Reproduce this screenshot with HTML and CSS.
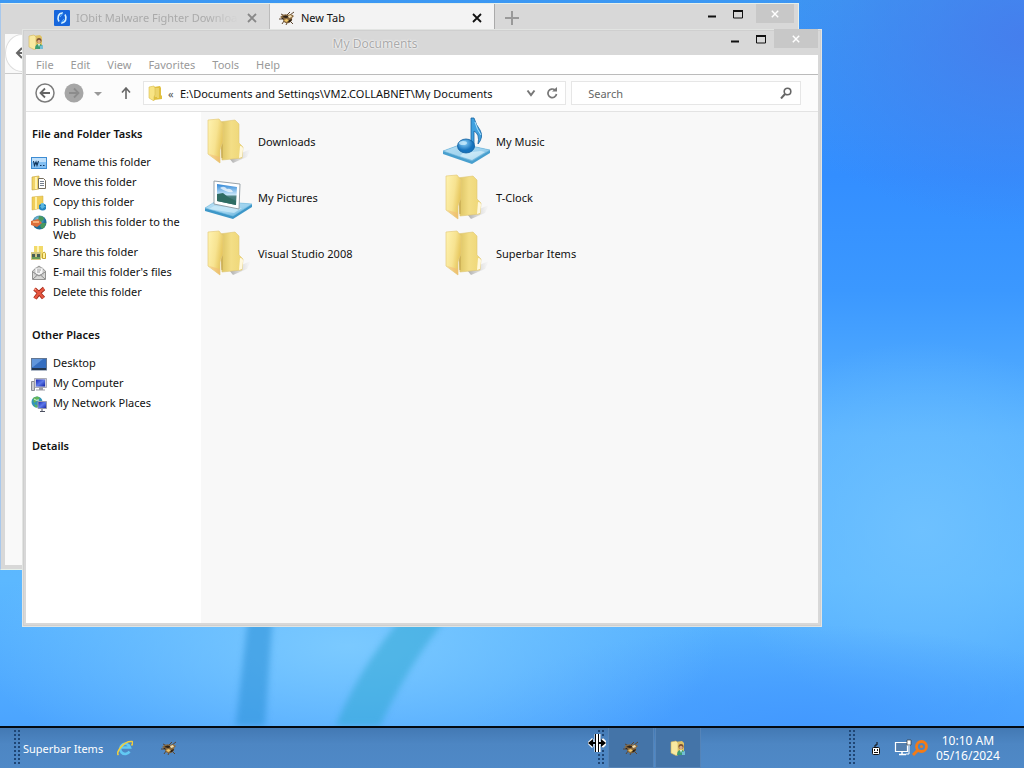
FILE: index.html
```html
<!DOCTYPE html>
<html lang="en">
<head>
<meta charset="utf-8">
<title>My Documents</title>
<link rel="stylesheet" href="styles.css">
</head>
<body>
<svg class="defs" aria-hidden="true">
  <defs>
    <linearGradient id="gFront" x1="0" x2="1" y1="0" y2="0.4"><stop offset="0" stop-color="#fff3b0"/><stop offset="0.6" stop-color="#f7e391"/><stop offset="1" stop-color="#e6c65c"/></linearGradient>
    <linearGradient id="gBack" x1="0" x2="1"><stop offset="0" stop-color="#d9bf5c"/><stop offset="0.5" stop-color="#f3de86"/><stop offset="1" stop-color="#eed676"/></linearGradient>
    <linearGradient id="gBase" x1="0" x2="1" y1="0" y2="1"><stop offset="0" stop-color="#b9e0f4"/><stop offset="0.6" stop-color="#9dd2ee"/><stop offset="1" stop-color="#4da4d4"/></linearGradient>
    <linearGradient id="gSky" x1="0" x2="0" y1="0" y2="1"><stop offset="0" stop-color="#2f86d6"/><stop offset="0.5" stop-color="#c4e4f8"/><stop offset="0.6" stop-color="#4a7f7e"/><stop offset="1" stop-color="#2c6e6b"/></linearGradient>
    <radialGradient id="gNote" cx="0.4" cy="0.3"><stop offset="0" stop-color="#8ed3fa"/><stop offset="1" stop-color="#1673bd"/></radialGradient>
    <linearGradient id="gShadow" x1="0" x2="1"><stop offset="0" stop-color="#888" stop-opacity="0.7"/><stop offset="1" stop-color="#bbb" stop-opacity="0"/></linearGradient>
    <radialGradient id="gGlobe" cx="0.4" cy="0.3"><stop offset="0" stop-color="#8fd0e8"/><stop offset="1" stop-color="#1d6d96"/></radialGradient>
    <linearGradient id="gScreen" x1="0" x2="1" y1="0" y2="1"><stop offset="0" stop-color="#1523b5"/><stop offset="0.5" stop-color="#5d79ea"/><stop offset="1" stop-color="#0f1fa0"/></linearGradient>

    <symbol id="folder" viewBox="0 0 48 48">
      <path d="M24 41 L46 32 L42 40 L28 46Z" fill="url(#gShadow)"/>
      <path d="M14 5 L30 3 L34 7 L34 26 L38 30 L37 41 L17 43Z" fill="url(#gBack)" stroke="#dfc673" stroke-width=".6"/>
      <path d="M17 7v34" stroke="#bfa049" stroke-width="2" opacity=".5"/>
      <path d="M35 29c2 0 3 1 3 3l-1 8-3 1z" fill="#fff8dc"/>
      <path d="M3 3 L14 2 L18 7 L18 25 Q16 29 15 33 L15 46 L3 37 Z" fill="url(#gFront)" stroke="#e5cc7c" stroke-width=".7"/>
      <path d="M4 37l11 9v-6z" fill="#f2b978" opacity=".55"/>
    </symbol>
    <symbol id="pictures" viewBox="0 0 48 48">
      <path d="M0 35 L11 29 L47 31 L47 34 L28 46 L0 38Z" fill="#3d97c8"/>
      <path d="M0 35 L11 28 L47 31 L28 43Z" fill="url(#gBase)" stroke="#79bde0" stroke-width=".6"/>
      <path d="M9 33 L37 35 L29 40 L4 36Z" fill="#d9f1fb" opacity=".6"/>
      <path d="M9 8 L35 11 L34 36 L9 31Z" fill="#fff" stroke="#8d999f" stroke-width=".9"/>
      <path d="M12 11 L32 14 L31 32 L12 28Z" fill="url(#gSky)"/>
      <path d="M12 21l6-1 5 4 8 4v4l-19-4z" fill="#2f6c63"/>
      <path d="M15 15q4-3 7 1 4-1 6 3-6 1-13-4z" fill="#fff" opacity=".7"/>
    </symbol>
    <symbol id="music" viewBox="0 0 48 48">
      <path d="M0 34 L19 27 L47 33 L47 36 L29 47 L0 37Z" fill="#489fce"/>
      <path d="M0 34 L19 27 L47 33 L29 44Z" fill="url(#gBase)" stroke="#70b6da" stroke-width=".6"/>
      <path d="M20 36l18-2 4 1-13 8-12-4z" fill="#e5f7fe" opacity=".6"/>
      <path d="M28 1 L31 1 Q33 8 37 13 Q41 20 35 27 Q37 17 31 14 L31 31 L28 31Z" fill="#3fa0df" stroke="#1762a0" stroke-width=".8"/>
      <path d="M32 5q2 8 6 13" stroke="#a9e0fb" stroke-width="1" fill="none"/>
      <ellipse cx="23" cy="29" rx="8.500" ry="7" fill="url(#gNote)" stroke="#12609f" stroke-width=".8"/>
      <ellipse cx="20" cy="26" rx="4" ry="2" fill="#d3f1fd" opacity=".7"/>
    </symbol>
    <symbol id="user-folder" viewBox="0 0 16 16">
      <path d="M5 2l7-1 2 2v11l-9 1z" fill="#dfc266"/>
      <path d="M1 2l5-1 2 2v12l-2 .5L1 13z" fill="#f8e9a1" stroke="#d3b75c" stroke-width=".6"/>
      <circle cx="11" cy="6.500" r="2.500" fill="#7a5134"/><circle cx="11" cy="7.500" r="1.700" fill="#e0ac84"/>
      <path d="M7 15q0-5 4-5t4 5z" fill="#3c9d73"/><path d="M10 10l1 3 1-3z" fill="#e8f7f0"/><path d="M12 12l3-1v4h-3z" fill="#71bdd6"/>
    </symbol>
    <symbol id="mini-folder" viewBox="0 0 16 16">
      <path d="M6 2l6-1 1 2v7l1 1v3l-8 1z" fill="#e0bf3f"/><path d="M8 3v9M10 3v10" stroke="#f8ea9c"/>
      <path d="M1 2l5-1 1 2v7l-1 2v4l-5-3z" fill="#f8e485" stroke="#d9bd4e" stroke-width=".6"/>
    </symbol>
    <symbol id="bee" viewBox="0 0 16 16">
      <path d="M6 6L2 4M7 6l4-4M11 5l4-3M4 9H0M5 11l-2 3M8 13l-1 2M12 12l2 2" stroke="#5c4630" stroke-width="1" fill="none"/>
      <path d="M1 7q4-4 8-2 3-2 6 1l-2 2q1 3-3 5-6 1-6-4z" fill="#8a6a3f"/>
      <path d="M3 7q4-3 7 0l-3 1zM8 12q4 1 5-3l-3 1z" fill="#2b2118"/>
      <path d="M5 10l3-1 2 2-3 1z" fill="#f2c868"/>
      <path d="M9 6l3-1 1 2-3 1z" fill="#f1dfb4"/>
      <path d="M2 8l2 0 1 2z" fill="#2b2118"/>
    </symbol>
    <symbol id="iobit" viewBox="0 0 16 16">
      <rect width="16" height="16" rx="1" fill="#1666dc"/>
      <path d="M9 3C4 3 3 8 5 11.500M7 13c5 0 6-5 4-8.500" fill="none" stroke="#d7f1ff" stroke-width="1.600"/><path d="M9 3L6 7M7 13l3-4" stroke="#61b8ff"/>
    </symbol>
    <symbol id="rename" viewBox="0 0 16 16">
      <rect x=".5" y="2.500" width="15" height="11" fill="#83bff2" stroke="#3d8cd3"/><path d="M1 3h14v4H1z" fill="#c0e0fb"/>
      <path d="M2.500 6l1 4.500L5 7l1 3.500L7.500 6M9 10.500h1.500M12 10.500h1.500" stroke="#11365d" stroke-width="1.100" fill="none"/>
    </symbol>
    <symbol id="move" viewBox="0 0 16 16">
      <path d="M1 2l7-1v13l-7 1z" fill="#f2d568" stroke="#c5a137" stroke-width=".6"/><path d="M5 2v12" stroke="#fff3b2" stroke-width="2"/>
      <path d="M7.500 3.500h5l2 2v8h-7z" fill="#fff" stroke="#746c5c"/><path d="M9 6.500h4M9 8.500h4M9 10.500h4" stroke="#77818e"/>
    </symbol>
    <symbol id="copy" viewBox="0 0 16 16">
      <path d="M1 2l11-1v12L1 15z" fill="#f0ce58" stroke="#ceaa3f" stroke-width=".5"/><path d="M5 2v12" stroke="#fff1a8" stroke-width="2"/>
      <path d="M8 10q4-3 7 0v4q-3 3-7 0z" fill="#2583bd"/><path d="M10 8l3 0v3h2l-4 3-2-3h1z" fill="#69c3e8" opacity=".8"/>
    </symbol>
    <symbol id="globe" viewBox="0 0 16 16">
      <circle cx="8.500" cy="7.500" r="7" fill="url(#gGlobe)"/><path d="M8 1q5 0 5 3l-3 3-3-2zM11 8l4 0q-1 5-4 6l-2-3z" fill="#49995d"/>
      <path d="M0 6l7-2 4 4-5 4-6-2z" fill="#db6f3b"/><path d="M2 7h6" stroke="#ffc48d" stroke-width="1.500"/>
    </symbol>
    <symbol id="share" viewBox="0 0 16 16">
      <path d="M3 1l9 0v12l-9 1z" fill="#f2da6a"/><path d="M7 1v9" stroke="#fff4b5" stroke-width="2"/>
      <path d="M0 7h10v8H0z" fill="#d2c680"/><path d="M1 9h3v3H1zM6 9h3v3H6z" fill="#475e57"/><path d="M1 13h8" stroke="#6a9a56" stroke-width="2"/>
      <path d="M11.500 8.500q2-3 3 0v5h-3z" fill="#fff2a0" stroke="#c5a42f"/>
    </symbol>
    <symbol id="mail" viewBox="0 0 16 16">
      <path d="M1.500 6L8 1l6.500 5v8.500h-13z" fill="#d8d8d6" stroke="#939391"/><path d="M4 3h8v7H4z" fill="#f8f8f8" stroke="#aaa" stroke-width=".6"/>
      <path d="M2 7l6 4 6-4M2 14l4.500-4M14 14l-4.500-4" stroke="#8b8b8b" fill="none"/><path d="M6 5h4M6 7h3" stroke="#999"/>
    </symbol>
    <symbol id="delete" viewBox="0 0 16 16">
      <path d="M3.500 4q4 3 9 9M13 3.500Q8 7 4 13.500" stroke="#9d2819" stroke-width="4" fill="none"/><path d="M3.500 4q4 3 9 9M13 3.500Q8 7 4 13.500" stroke="#e65640" stroke-width="2.400" fill="none"/><path d="M3 3.500l2 1.500" stroke="#f9b09d"/>
    </symbol>
    <symbol id="desk" viewBox="0 0 16 16">
      <rect x=".5" y="2.500" width="15" height="11.500" fill="#356ec0" stroke="#637792"/><path d="M1 3h11L2 11H1z" fill="#75a6e7" opacity=".7"/><path d="M1 13h14" stroke="#22364f" stroke-width="2"/>
    </symbol>
    <symbol id="computer" viewBox="0 0 16 16">
      <path d="M.5 5.500h3v9h-3z" fill="#cbccd0" stroke="#8a8c94"/><path d="M3.500 2.500h12v9h-12z" fill="#ccccda" stroke="#92949d" stroke-width=".7"/><path d="M5 3.500h9v7H5z" fill="url(#gScreen)"/><path d="M8 11.500h4v2H8zM5 13.500h9v1H5z" fill="#9b9ca5"/>
    </symbol>
    <symbol id="network" viewBox="0 0 16 16">
      <circle cx="6" cy="6" r="5.500" fill="#3294b7"/><path d="M2 2q5-3 7 0L6 5 3 7zM3 8l4 2-2 2z" fill="#62b558"/><path d="M3 3q2 2 5 1" stroke="#d7f2ef" fill="none"/>
      <path d="M7 5.500h8.500v7H7z" fill="url(#gScreen)" stroke="#999cac"/><path d="M11 13v3M9 15.500h5" stroke="#4c5060"/>
    </symbol>
    <symbol id="close" viewBox="0 0 10 10"><path d="M1 1l8 8M9 1L1 9" stroke="currentColor" stroke-width="1.800"/></symbol>
    <symbol id="min" viewBox="0 0 10 10"><path d="M1 7.500h8" stroke="currentColor" stroke-width="2"/></symbol>
    <symbol id="max" viewBox="0 0 10 10"><path d="M.5 1v8h9V1" fill="none" stroke="currentColor"/><path d="M0 2h10" stroke="currentColor" stroke-width="2"/></symbol>
  </defs>
</svg>

<div class="screen">
  <main class="desktop">
    <svg class="strands" viewBox="0 0 1024 726" preserveAspectRatio="none" aria-hidden="true">
      <path d="M250 600h24l-10 140h-30z" fill="#2f92d8" opacity=".6"/>
      <path d="M418 600h44q-54 60-88 140h-44q30-80 88-140z" fill="#32a7d4" opacity=".55"/>
    </svg>

    <section class="window browser" aria-label="New Tab">
      <div class="tabstrip">
        <div class="tab tab-idle"><svg class="i16"><use href="#iobit"/></svg><button class="tab-name">IObit Malware Fighter Downloa</button><button class="tab-x" aria-label="Close tab"><svg class="i10"><use href="#close"/></svg></button></div>
        <div class="tab tab-active"><svg class="i16"><use href="#bee"/></svg><button class="tab-name">New Tab</button><button class="tab-x" aria-label="Close tab"><svg class="i10"><use href="#close"/></svg></button></div>
        <button class="tab-add" aria-label="Open a new tab"><svg class="i14" viewBox="0 0 14 14"><path d="M7 0v14M0 7h14" stroke="#999" stroke-width="2"/></svg></button>
        <div class="controls">
          <button aria-label="Minimize"><svg class="i10"><use href="#min"/></svg></button>
          <button aria-label="Maximize"><svg class="i10"><use href="#max"/></svg></button>
          <button class="control-close" aria-label="Close"><svg class="i8"><use href="#close"/></svg></button>
        </div>
      </div>
      <div class="browser-nav"><button class="browser-back" aria-label="Back"><svg class="i14" viewBox="0 0 14 14"><path d="M13 7H2M7 2L2 7l5 5" fill="none" stroke="#666" stroke-width="2"/></svg></button></div>
      <div class="browser-page"></div>
    </section>

    <section class="window explorer" aria-label="My Documents">
      <header class="titlebar">
        <svg class="i16"><use href="#user-folder"/></svg>
        <h1>My Documents</h1>
        <div class="controls">
          <button aria-label="Minimize"><svg class="i10"><use href="#min"/></svg></button>
          <button aria-label="Maximize"><svg class="i10"><use href="#max"/></svg></button>
          <button class="control-close" aria-label="Close"><svg class="i8"><use href="#close"/></svg></button>
        </div>
      </header>
      <nav class="menubar"><button>File</button><button>Edit</button><button>View</button><button>Favorites</button><button>Tools</button><button>Help</button></nav>
      <div class="toolbar">
        <div class="nav-buttons">
          <button aria-label="Back"><svg class="i20" viewBox="0 0 20 20"><circle cx="10" cy="10" r="9" fill="#fff" stroke="#7c7c7c" stroke-width="1.500"/><path d="M15 10H6M10 5.500L5.500 10l4.500 4.500" fill="none" stroke="#666" stroke-width="1.800"/></svg></button>
          <button aria-label="Forward"><svg class="i20" viewBox="0 0 20 20"><circle cx="10" cy="10" r="9.500" fill="#a6a6a6"/><path d="M5 10h9M10 5.500l4.500 4.500-4.500 4.500" fill="none" stroke="#8c8c8c" stroke-width="1.800"/></svg></button>
          <button aria-label="Recent locations"><svg class="i10" viewBox="0 0 10 10"><path d="M1 4h8L5 8z" fill="#999"/></svg></button>
          <button class="up" aria-label="Up"><svg class="i12" viewBox="0 0 12 12"><path d="M6 12V1M2 5.500L6 1l4 4.500" fill="none" stroke="#666" stroke-width="1.600"/></svg></button>
        </div>
        <div class="address">
          <svg class="i16"><use href="#mini-folder"/></svg><span class="crumb">«</span>
          <input type="text" aria-label="Address" value="E:\Documents and Settings\VM2.COLLABNET\My Documents">
          <button aria-label="Previous locations"><svg class="i10" viewBox="0 0 10 10"><path d="M1.500 2.500L5 7l3.500-4.500" fill="none" stroke="#777" stroke-width="2"/></svg></button>
          <button aria-label="Refresh"><svg class="i12" viewBox="0 0 12 12"><path d="M9 3A4.300 4.300 0 1 0 10.500 7" fill="none" stroke="#777" stroke-width="1.700"/><path d="M6 4.500h5V0z" fill="#777"/></svg></button>
        </div>
        <div class="search">
          <input type="text" aria-label="Search" placeholder="Search">
          <button aria-label="Start search"><svg class="i12" viewBox="0 0 12 12"><circle cx="7.500" cy="4.500" r="3.300" fill="none" stroke="#666" stroke-width="1.600"/><path d="M5 7L1 11.500" stroke="#666" stroke-width="2"/></svg></button>
        </div>
      </div>
      <div class="body">
        <aside class="sidebar">
          <h2>File and Folder Tasks</h2>
          <ul>
            <li><a href="#"><svg class="i16"><use href="#rename"/></svg>Rename this folder</a></li>
            <li><a href="#"><svg class="i16"><use href="#move"/></svg>Move this folder</a></li>
            <li><a href="#"><svg class="i16"><use href="#copy"/></svg>Copy this folder</a></li>
            <li><a href="#"><svg class="i16"><use href="#globe"/></svg>Publish this folder to the Web</a></li>
            <li><a href="#"><svg class="i16"><use href="#share"/></svg>Share this folder</a></li>
            <li><a href="#"><svg class="i16"><use href="#mail"/></svg>E-mail this folder's files</a></li>
            <li><a href="#"><svg class="i16"><use href="#delete"/></svg>Delete this folder</a></li>
          </ul>
          <h2>Other Places</h2>
          <ul>
            <li><a href="#"><svg class="i16"><use href="#desk"/></svg>Desktop</a></li>
            <li><a href="#"><svg class="i16"><use href="#computer"/></svg>My Computer</a></li>
            <li><a href="#"><svg class="i16"><use href="#network"/></svg>My Network Places</a></li>
          </ul>
          <h2>Details</h2>
        </aside>
        <div class="files">
          <a href="#"><svg class="i48"><use href="#folder"/></svg>Downloads</a>
          <a href="#"><svg class="i48"><use href="#music"/></svg>My Music</a>
          <a href="#"><svg class="i48"><use href="#pictures"/></svg>My Pictures</a>
          <a href="#"><svg class="i48"><use href="#folder"/></svg>T-Clock</a>
          <a href="#"><svg class="i48"><use href="#folder"/></svg>Visual Studio 2008</a>
          <a href="#"><svg class="i48"><use href="#folder"/></svg>Superbar Items</a>
        </div>
      </div>
    </section>
  </main>

  <footer class="taskbar">
    <div class="band quick">
      <span class="grip"></span><span class="band-name">Superbar Items</span>
      <button aria-label="Internet Explorer"><svg class="i16" viewBox="0 0 16 16"><path d="M12.500 11.500A5 5 0 1 1 13 7.500H4" fill="none" stroke="#62c9f3" stroke-width="2.600"/><path d="M1.500 15Q-1 13 4 7T15 1.500q1.500 1-.5 4" fill="none" stroke="#f2cf3e" stroke-width="1.600"/></svg></button>
      <button aria-label="Browser"><svg class="i16"><use href="#bee"/></svg></button>
    </div>
    <div class="band tasks">
      <span class="grip"></span>
      <button class="task" aria-label="New Tab"><svg class="i16"><use href="#bee"/></svg></button>
      <button class="task" aria-label="My Documents"><svg class="i16"><use href="#user-folder"/></svg></button>
      <svg class="cursor" viewBox="0 0 18 20" aria-hidden="true"><path d="M8 1v18M11 1v18M1 10h17M5 6l-4 4 4 4M14 6l4 4-4 4" stroke="#fff" stroke-width="3" fill="none"/><path d="M7.500 1v18M10.500 1v18" stroke="#000" stroke-width="1"/><path d="M0 10l5-4v3h2v2H5v3zM18 10l-5-4v3h-2v2h2v3z" fill="#000"/></svg>
    </div>
    <div class="band tray">
      <span class="grip"></span>
      <button aria-label="Safely remove hardware"><svg class="i16" viewBox="0 0 16 16"><path d="M7 7V5h2V2" fill="none" stroke="#111"/><rect x="4.500" y="7.500" width="7" height="7" rx="1" fill="#fff" stroke="#111"/><path d="M6 9h1v2H6zM9 9h1v2H9zM6 12h4v1H6z" fill="#111"/></svg></button>
      <button aria-label="Network"><svg class="i18" viewBox="0 0 18 18"><path d="M1.500 3.500h12v9h-12z" fill="#547fae" stroke="#fff" stroke-width="1.200"/><path d="M5 15.500h7M8 13v2" stroke="#fff" stroke-width="1.500"/><path d="M13 1h4v5h-4z" fill="#fff" stroke="#333" stroke-width=".7"/><path d="M15 6v9h-3" stroke="#fff" fill="none"/></svg></button>
      <button aria-label="Search everything"><svg class="i16" viewBox="0 0 16 16"><circle cx="9.500" cy="6.500" r="5" fill="none" stroke="#f47b16" stroke-width="2.800"/><path d="M6 10l-5 5" stroke="#f47b16" stroke-width="3"/><circle cx="9.500" cy="6.500" r="1.500" fill="#f47b16"/></svg></button>
      <button class="clock"><span>10:10 AM</span><span>05/16/2024</span></button>
    </div>
  </footer>
</div>
</body>
</html>
```
FILE: styles.css
```css
* { box-sizing: border-box; }
body { margin: 0; font: 11px/13px "Noto Sans", "Open Sans", sans-serif; color: #111; }
button, input { font: inherit; color: inherit; background: none; border: 0; padding: 0; margin: 0; }
button { display: flex; align-items: center; justify-content: center; }
input { min-width: 0; outline: 0; }
a { color: inherit; text-decoration: none; }
h1, h2, ul { margin: 0; padding: 0; font-weight: normal; list-style: none; }
svg { display: block; flex: none; }
.defs { position: absolute; width: 0; height: 0; }
.i8 { width: 8px; height: 8px; }
.i10 { width: 10px; height: 10px; }
.i12 { width: 12px; height: 12px; }
.i14 { width: 14px; height: 14px; }
.i16 { width: 16px; height: 16px; }
.i18 { width: 18px; height: 18px; }
.i20 { width: 20px; height: 20px; }
.i48 { width: 48px; height: 48px; }

.screen { height: 100vh; display: grid; grid-template-rows: minmax(0, 1fr) 42px; }
.desktop {
  position: relative;
  overflow: hidden;
  background:
    radial-gradient(ellipse 26% 26% at 100% 5%, rgba(70, 124, 236, .9), rgba(70, 124, 236, 0)),
    radial-gradient(ellipse 36% 20% at 34% 89%, rgba(125, 203, 255, .95), rgba(125, 203, 255, 0)),
    radial-gradient(ellipse 32% 14% at 78% 100%, rgba(66, 152, 255, .9), rgba(66, 152, 255, 0)),
    radial-gradient(ellipse 20% 26% at 90% 73%, rgba(112, 194, 255, .9), rgba(112, 194, 255, 0)),
    linear-gradient(#3c98f3, #338eff 24%, #3b98ff 40%, #5ab3ff 60%, #5cb8ff 80%, #4ba4ff);
}
.strands { position: absolute; inset: 0; width: 100%; height: 100%; filter: blur(3px); }

.window { position: absolute; display: flex; flex-direction: column; background: #d8d8d8; }
.controls { display: flex; margin-left: auto; color: #111; }
.controls button { width: 26px; height: 19px; }
.controls .control-close { width: 38px; background: #c8c8c8; color: #fff; margin-left: 5px; }

.browser { inset: 3px 225px 156px 0; padding: 0 4px 4px; border: 1px solid #e6f0ea; border-left-color: #a8c8ec; }
.tabstrip { display: flex; align-items: flex-start; padding-left: 40px; height: 30px; }
.tab { display: flex; align-items: center; gap: 6px; height: 27px; width: 225px; padding: 0 9px; }
.tab-idle { color: #aaa; border-right: 1px solid #bbb; }
.tab-active { background: #f3f3f3; border-right: 1px solid #aaa; }
.tab-name { flex: 1; min-width: 0; justify-content: flex-start; overflow: hidden; white-space: nowrap; line-height: 20px; }
.tab-idle .tab-name { mask-image: linear-gradient(90deg, #000 80%, transparent); }
.tab-x { width: 16px; }
.tab-idle .tab-x { color: #888; }
.tab-add { width: 34px; height: 27px; }
.browser-nav { height: 40px; background: #f9f9f9; border-bottom: 1px solid #ccc; }
.browser-back { width: 34px; height: 38px; border: 1px solid #ddd; border-radius: 50%; background: #fff; }
.browser-page { flex: 1; background: #f9f9f9; }

.explorer { inset: 29px 202px 99px 22px; padding: 0 4px 4px; box-shadow: inset 0 0 0 1px #e2e4e2, inset 0 0 0 2px #cfcfcf; }
.titlebar { display: grid; grid-template-columns: 1fr auto 1fr; height: 26px; padding-left: 2px; align-items: center; }
.titlebar h1 { padding-top: 3px; margin-right: 96px; font-size: 12px; line-height: 16px; color: #aaa; text-shadow: 0 0 2px #fff, 0 0 2px #fff; }
.titlebar .controls { align-self: start; }
.titlebar .controls .control-close { width: 44px; margin-left: 0; }
.menubar { display: flex; gap: 17px; height: 20px; padding-left: 10px; background: #fff; border-bottom: 1px solid #bbb; color: #999; }
.toolbar { display: flex; align-items: center; height: 37px; padding: 0 17px 0 9px; background: #fcfcfc; border-bottom: 1px solid #e3e3e3; }
.nav-buttons { display: flex; align-items: center; gap: 9px; width: 108px; }
.nav-buttons .up { margin-left: 8px; }
.address, .search { display: flex; align-items: center; height: 24px; background: #fff; border: 1px solid #e6e6e6; }
.address { flex: 1; min-width: 0; padding: 0 7px 0 4px; gap: 4px; }
.address input { flex: 1; }
.address button { margin-left: 6px; }
.crumb { width: 8px; color: #555; }
.search { flex: 0 1 30%; min-width: 0; margin-left: 5px; padding: 0 8px 0 16px; color: #666; }
.search input { flex: 1; }
.search input::placeholder { color: #666; opacity: 1; }
.body { flex: 1; min-height: 0; display: grid; grid-template-columns: 175px minmax(0, 1fr); }
.sidebar { padding: 15px 10px 0 5px; background: #fff; overflow: hidden; }
.sidebar h2 { padding-left: 1px; font-size: 11px; line-height: 14px; font-weight: 600; white-space: nowrap; }
.sidebar ul { display: grid; gap: 4px; margin: 14px 0 27px; }
.sidebar a { display: flex; gap: 6px; min-height: 16px; }
.files { display: grid; grid-template-columns: repeat(auto-fill, 238px); grid-auto-rows: 48px; row-gap: 8px; align-content: start; padding: 5px 4px; background: #f8f8f8; overflow: hidden; }
.files a { display: flex; align-items: center; gap: 5px; }

.taskbar { display: grid; grid-template-columns: minmax(0, 584fr) minmax(0, 251fr) 175px; padding-left: 14px; border-top: 2px solid #030a12; background: linear-gradient(#4379b4, #4d86c3 40%, #4f89c7); color: #fff; }
.band { display: flex; align-items: center; }
.grip { width: 6px; height: 36px; background: radial-gradient(circle at 1px 1px, #1f4675 1px, transparent 1px) 0 0 / 4px 4px; }
.band-name { margin: 0 12px 0 3px; }
.quick button { width: 20px; margin-right: 24px; }
.tasks { position: relative; gap: 1px; }
.tasks .grip { margin-right: 3px; }
.task { width: 46px; height: 40px; background: #4474a8; border: 1px solid #5584b8; border-top: 0; }
.cursor { position: absolute; left: -10px; top: 5px; width: 18px; height: 20px; }
.tray .grip { margin-right: 13px; }
.tray button + button { margin-left: 10px; }
.tray button + button + button { margin-left: 0; }
.tray button.clock { flex-direction: column; margin-left: 8px; font-size: 12px; line-height: 15px; }
```
